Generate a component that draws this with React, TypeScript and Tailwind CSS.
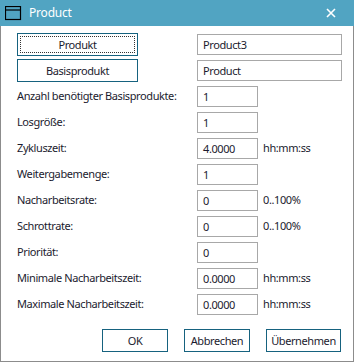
import React from 'react';

type Row = { label: string; value: string; unit?: string };

const rows: Row[] = [
  { label: 'Anzahl benötigter Basisprodukte:', value: '1' },
  { label: 'Losgröße:', value: '1' },
  { label: 'Zykluszeit:', value: '4.0000', unit: 'hh:mm:ss' },
  { label: 'Weitergabemenge:', value: '1' },
  { label: 'Nacharbeitsrate:', value: '0', unit: '0..100%' },
  { label: 'Schrottrate:', value: '0', unit: '0..100%' },
  { label: 'Priorität:', value: '0' },
  { label: 'Minimale Nacharbeitszeit:', value: '0.0000', unit: 'hh:mm:ss' },
  { label: 'Maximale Nacharbeitszeit:', value: '0.0000', unit: 'hh:mm:ss' },
];

const Field: React.FC<{ value: string; wide?: boolean }> = ({ value, wide }) => (
  <div
    className={`h-[21px] ${wide ? 'w-[145px]' : 'w-[61px]'} border border-[#a8a8a8] bg-white flex items-center pl-[5px] leading-none`}
  >
    {value}
  </div>
);

const DlgButton: React.FC<{ label: string; width: string; focus?: boolean }> = ({ label, width, focus }) => (
  <button className={`${width} h-[23px] border border-[#16627f] bg-white p-[2px] leading-none`}>
    <span
      className={`flex h-full w-full items-center justify-center ${focus ? 'outline outline-1 outline-dotted outline-[#333] -outline-offset-1' : ''}`}
    >
      {label}
    </span>
  </button>
);

export default function App() {
  return (
    <div
      className="w-[354px] h-[362px] flex flex-col bg-white text-[11px] tracking-[-0.4px] text-[#1b1b2e]"
      style={{ fontFamily: '"Noto Sans", "Open Sans", sans-serif' }}
    >
      {/* Titelleiste */}
      <div className="h-[26px] bg-[#51a4c2] flex items-center pl-[5px] pr-[18px] text-white">
        <svg width="17" height="15" viewBox="0 0 17 15" className="shrink-0">
          <rect x="0.5" y="0.5" width="15" height="13" fill="none" stroke="#000" strokeWidth="1.2" />
          <line x1="0.5" y1="4" x2="15.5" y2="4" stroke="#000" strokeWidth="1.2" />
        </svg>
        <span className="ml-[7px] text-[12px] tracking-[-0.2px]">Product</span>
        <svg width="10" height="10" viewBox="0 0 10 10" className="ml-auto">
          <path d="M1 1 L9 9 M9 1 L1 9" stroke="#fff" strokeWidth="1.6" />
        </svg>
      </div>

      <div className="flex-1 border-x border-b border-[#8c8c8c] pl-[16px] pr-[11px] pt-[7px] flex flex-col">
        <div className="flex items-center h-[23px]">
          <div className="w-[180px]">
            <DlgButton label="Produkt" width="w-[121px]" focus />
          </div>
          <Field value="Product3" wide />
        </div>
        <div className="flex items-center h-[23px] mt-[3px]">
          <div className="w-[180px]">
            <DlgButton label="Basisprodukt" width="w-[121px]" />
          </div>
          <Field value="Product" wide />
        </div>

        <div className="flex flex-col gap-[5px] mt-[4px]">
          {rows.map((r) => (
            <div key={r.label} className="flex items-center h-[21px]">
              <div className="w-[180px] whitespace-nowrap">{r.label}</div>
              <Field value={r.value} />
              {r.unit && <span className="ml-[5px]">{r.unit}</span>}
            </div>
          ))}
        </div>

        <div className="flex justify-end mt-[14px] pr-[1px]">
          <DlgButton label="OK" width="w-[66px]" />
          <div className="w-[16px]" />
          <DlgButton label="Abbrechen" width="w-[66px]" />
          <div className="w-[16px]" />
          <DlgButton label="Übernehmen" width="w-[75px]" />
        </div>
      </div>
    </div>
  );
}
